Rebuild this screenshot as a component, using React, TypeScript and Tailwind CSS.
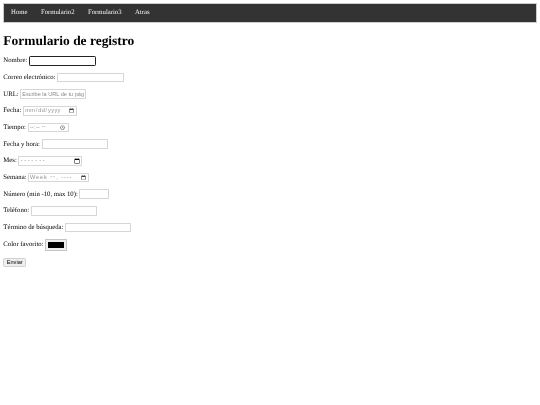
const field = "h-[23px] shrink-0 border-2 border-[#d6d6d6] px-[2px] py-[1px] text-[13.333px] leading-none font-['Liberation_Sans',sans-serif] bg-white rounded-[2px] placeholder:text-[#8a8a8a]";
const dateField = "text-[#8f8f8f]";
const row = "mb-4 flex h-[23.7px] items-center gap-[4px]";
const labelCls = "pt-[2px]";

const rows = [
  { label: "Correo electrónico:", type: "email", w: "w-[159px] text-black" },
  { label: "URL:", type: "url", placeholder: "Escribe la URL de tu página", w: "w-[157px] text-black" },
  { label: "Fecha:", type: "date", w: `w-[129px] tracking-[1px] ${dateField}` },
  { label: "Tiempo:", type: "time", w: `w-[98px] tracking-[1.5px] ${dateField}` },
  { label: "Fecha y hora:", type: "text", w: "w-[159px] text-black" },
  { label: "Mes:", type: "month", w: `w-[152px] tracking-[4px] ${dateField}` },
  { label: "Semana:", type: "week", w: `w-[145px] tracking-[2px] ${dateField}` },
  { label: "Número (min -10, max 10):", type: "number", w: "w-[71px] text-black" },
  { label: "Teléfono:", type: "tel", w: "w-[159px] text-black" },
  { label: "Término de búsqueda:", type: "search", w: "w-[157px] text-black" },
];

export default function App() {
  return (
    <div className="min-h-[964px] w-[1286px] bg-white p-2 font-['Liberation_Serif',serif] text-[16px] text-black [filter:blur(0.35px)] [text-rendering:geometricPrecision] [zoom:0.42]">
      <nav className="flex h-[46px] items-center border-2 border-[#cccccc] bg-[#333333]">
        {["Home", "Formulario2", "Formulario3", "Atras"].map((t) => (
          <a key={t} className="px-[16px] text-[#f2f2f2]">{t}</a>
        ))}
      </nav>
      <h1 className="mt-[24px] mb-[18px] text-[32px] font-bold leading-[37px]">Formulario de registro</h1>
      <form>
        <div className={row}>
          <label className={labelCls}>Nombre:</label>
          <input type="text" className="h-[23px] w-[159px] rounded-[3px] border-[3px] border-[#222222] bg-white" />
        </div>
        {rows.map((r) => (
          <div key={r.label} className={row}>
            <label className={labelCls}>{r.label}</label>
            <input type={r.type} placeholder={r.placeholder} className={`${field} ${r.w}`} />
          </div>
        ))}
        <div className={`${row} mb-[20px]`}>
          <label className={labelCls}>Color favorito:</label>
          <input type="color" defaultValue="#000000" className="mt-[3px] h-[28px] w-[52px] shrink-0 rounded-[2px] border-2 border-[#c4c4c4] bg-[#efefef] p-[4px] [&::-webkit-color-swatch]:border-0 [&::-webkit-color-swatch-wrapper]:p-0" />
        </div>
        <button type="button" className="h-[22px] w-[54px] rounded-[3px] border-2 border-[#d0d0d0] bg-[#efefef] text-[13.333px] leading-none font-['Liberation_Sans',sans-serif]">Enviar</button>
      </form>
    </div>
  );
}
